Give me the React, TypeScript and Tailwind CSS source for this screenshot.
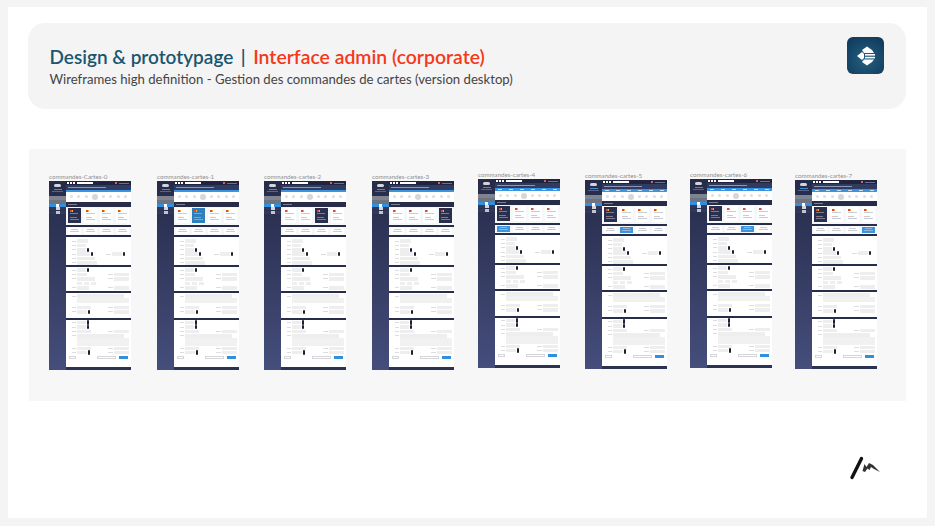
const thumbs = [
  { label: "commandes-Cartes-0", card: 0, tab: -1, wide: false, offset: "mt-0 ml-0" },
  { label: "commandes-cartes-1", card: 1, tab: -1, wide: false, offset: "mt-0 ml-[26px]" },
  { label: "commandes-cartes-2", card: 2, tab: -1, wide: false, offset: "mt-0 ml-[25px]" },
  { label: "commandes-cartes-3", card: 3, tab: -1, wide: false, offset: "mt-0 ml-[26px]" },
  { label: "commandes-cartes-4", card: 0, tab: 0, wide: true, offset: "-mt-[2px] ml-[24px]" },
  { label: "commandes-cartes-5", card: 0, tab: 1, wide: true, offset: "-mt-[1px] ml-[25px]" },
  { label: "commandes-cartes-6", card: 0, tab: 2, wide: true, offset: "-mt-[2px] ml-[23px]" },
  { label: "commandes-cartes-7", card: 0, tab: 3, wide: true, offset: "-mt-[1px] ml-[23px]" },
];

function Line({ className }: { className: string }) {
  return <div className={"h-px bg-[#c9ccd3] " + className} />;
}

function Field({ className }: { className: string }) {
  return <div className={"h-[3.5px] bg-[#eeeeef] " + className} />;
}

function Handle() {
  return <div className="ml-[1px] h-[4.5px] w-[2px] shrink-0 rounded-sm bg-[#1d2030]" />;
}

function Section() {
  return <div className="h-[2px] w-full shrink-0 bg-[#272c49]" />;
}

function FormRow({ left, handle, right, rightHandle }: { left: string; handle?: boolean; right?: boolean; rightHandle?: boolean }) {
  return (
    <div className="flex h-[4.4px] items-center pl-[6px] pr-[2px]">
      <div className="mr-[1px] h-px w-[4px] shrink-0 bg-[#dcdde1]" />
      <Field className={left} />
      {handle && <Handle />}
      {right && (
        <div className={"ml-auto flex items-center " + (rightHandle ? "mr-[4px]" : "")}>
          <div className="mr-[1px] h-px w-[5px] bg-[#dcdde1]" />
          <Field className={rightHandle ? "w-[10px]" : "w-[15px]"} />
          {rightHandle && <Handle />}
        </div>
      )}
    </div>
  );
}

function Card({ active, blue }: { active: boolean; blue: boolean }) {
  const bg = active ? (blue ? "bg-[#2f7fbd]" : "bg-[#2a2f4d]") : "bg-white";
  return (
    <div className={"flex h-[15px] flex-1 flex-col gap-[1px] p-[1.5px] " + bg}>
      <div className="flex h-[2px]">
        <div className="w-[2px] bg-[#e8452c]" />
        <div className="w-[1px] bg-[#f2b01e]" />
      </div>
      <Line className={active ? "w-[8px] opacity-50" : "w-[9px]"} />
      <div className="mt-[1px]" />
      <Line className={active ? "w-[7px] opacity-50" : "w-[6px]"} />
      <Line className={active ? "w-[9px] opacity-50" : "w-[9px]"} />
    </div>
  );
}

function Thumb({ label, card, tab, wide, offset }: { label: string; card: number; tab: number; wide: boolean; offset: string }) {
  return (
    <div className={"flex w-[82px] shrink-0 flex-col " + offset}>
      <div className="h-[6px] whitespace-nowrap text-[6.2px] leading-[6px] text-[#8f8f8f]">{label}</div>
      <div className="mt-[1px] flex h-[189px] bg-white blur-[0.3px]">
        <div className="flex w-[17px] shrink-0 flex-col bg-gradient-to-b from-[#262b49] to-[#454e7c]">
          <div className="mx-auto mt-[3px] h-[3px] w-[7px] rounded-full bg-white/80" />
          <div className="mx-auto mt-[2px] h-[1px] w-[8px] bg-[#3f8fd0]" />
          <div className="mx-auto mt-[1px] h-[1px] w-[11px] bg-[#5b6486]" />
          <div className="mt-[4px] h-[3.5px] bg-[#7e8491]" />
          <div className="mt-[0.5px] h-[3.5px] bg-[#6d7380]" />
          <div className="mt-[0.5px] flex h-[2.5px] justify-center bg-[#2f8fe0]"><div className="w-[3px] bg-white" /></div>
          <div className="mt-[0.5px] flex h-[3px] justify-center bg-[#32385a]"><div className="w-[4px] bg-white/80" /></div>
          <div className="mt-[0.5px] flex h-[3px] justify-center bg-[#32385a]"><div className="w-[4px] bg-white/70" /></div>
        </div>
        <div className="flex min-w-0 flex-1 flex-col">
          <div className="flex h-[4px] shrink-0 items-center bg-[#20243f] pl-[1px]">
            <div className="h-[2px] w-[2px] bg-white" />
            <div className="ml-[1px] h-[2px] w-[2px] bg-white" />
            <div className="ml-[1px] h-[2px] w-[2px] bg-white" />
            <div className="ml-[2px] h-[2px] w-[16px] bg-white" />
            <div className="ml-auto h-[2px] w-[2px] bg-[#c66]" />
            <div className="ml-[2px] mr-[2px] h-[1px] w-[10px] bg-[#6b7190]" />
          </div>
          <div className="flex h-[4.5px] shrink-0 items-center bg-[#303b62] px-[2px]">
            <div className="h-[1px] w-[38px] bg-[#8d96b4]" />
          </div>
          <div className={"flex shrink-0 items-center justify-around bg-[#3a94df] " + (wide ? "h-[3.5px]" : "h-[2px]")}>
            {wide && [0, 1, 2, 3, 4, 5].map((i) => <div key={i} className="h-px w-[4px] bg-white/70" />)}
          </div>
          <div className={"flex shrink-0 items-center justify-around px-[2px] " + (wide ? "h-[9px]" : "h-[10.5px]")}>
            {[0, 1, 2, 3, 4, 5, 6, 7].map((i) => (
              <div key={i} className={i === 3 ? "h-[6px] w-[6px] rounded-full bg-[#d6d7db]" : "h-[3px] w-[3px] rounded-full bg-[#dedfe2]"} />
            ))}
          </div>
          <div className="flex h-[5px] shrink-0 items-center bg-[#272c49] pl-[2px]">
            <div className="h-[1.5px] w-[9px] bg-white/40" />
          </div>
          <div className="flex h-[17.5px] shrink-0 items-start gap-[3px] bg-[#f6f7f9] px-[2px] pt-[1px]">
            {[0, 1, 2, 3].map((i) => (
              <Card key={i} active={i === card} blue={label.endsWith("-1")} />
            ))}
          </div>
          <Section />
          <div className="flex h-[8.5px] shrink-0 items-center gap-[3px] bg-[#f6f7f9] px-[2px]">
            {[0, 1, 2, 3].map((i) => (
              <div key={i} className={"flex h-[6px] flex-1 flex-col items-center justify-center gap-[1px] " + (i === tab ? "bg-[#3a94df]" : "bg-white")}>
                <Line className={i === tab ? "w-[7px] opacity-60" : "w-[7px]"} />
                <Line className={i === tab ? "w-[9px] opacity-60" : "w-[9px]"} />
              </div>
            ))}
          </div>
          <Section />
          <div className="flex h-[28px] shrink-0 flex-col pt-[2px]">
            <FormRow left="w-[11px]" />
            <FormRow left="w-[9px]" />
            <FormRow left="w-[9px]" handle />
            <FormRow left="w-[13px]" handle right rightHandle />
            <FormRow left="w-[18px]" />
            <FormRow left="w-[20px]" />
          </div>
          <Section />
          <div className="flex h-[24px] shrink-0 flex-col pt-[1px]">
            <FormRow left="w-[9px]" handle />
            <FormRow left="w-[10px]" right />
            <FormRow left="w-[18px]" right />
            <div className="flex h-[4.4px] items-center gap-[2px] pl-[11px]">
              <Field className="w-[5px]" />
              <Field className="w-[5px]" />
              <Field className="w-[5px]" />
            </div>
            <FormRow left="w-[12px]" right />
          </div>
          <Section />
          <div className="flex h-[24.5px] shrink-0 flex-col pt-[1px]">
            <FormRow left="w-[47px]" />
            <div className="ml-[11px] mr-[2px] h-[5px] bg-[#f1f1f2]" />
            <div className="h-[2px]" />
            <FormRow left="w-[14px]" right />
            <FormRow left="w-[10px]" handle right />
          </div>
          <Section />
          <div className="flex flex-col pt-[1px]">
            <FormRow left="w-[9px]" handle />
            <FormRow left="w-[9px]" handle />
            <FormRow left="w-[14px]" right />
            <FormRow left="w-[47px]" />
            <div className="ml-[11px] mr-[2px] h-[8px] bg-[#f1f1f2]" />
            <FormRow left="w-[14px]" right />
            <FormRow left="w-[10px]" handle right />
          </div>
          <div className="mt-auto flex items-center px-[3px] pb-[8px]">
            <div className="h-[3px] w-[7px] border border-[#d4d6da] bg-white" />
            <div className="ml-auto h-[3px] w-[19px] border border-[#d4d6da] bg-white" />
            <div className="ml-[3px] h-[3px] w-[9px] bg-[#2f8fe0]" />
          </div>
          <div className="h-[3px] shrink-0 bg-[#2c3252]" />
        </div>
      </div>
    </div>
  );
}

export default function App() {
  return (
    <div className="h-[526px] w-[935px] overflow-hidden bg-[#f4f4f4] px-[8px] pt-[7px] font-['Lato',sans-serif]">
      <div className="h-[511px] bg-white pl-[20px] pr-[21px] pt-[16px]">
        <div className="flex h-[86px] items-start justify-between rounded-[17px] bg-[#f4f4f4] pl-[21.5px] pr-[22px] pt-[14px]">
          <div className="mt-[7px]">
            <div className="whitespace-nowrap text-[19px] font-semibold leading-[26px] text-[#1a566f]">
              Design &amp; prototypage<span className="mx-[7.5px]">|</span>
              <span className="text-[19.4px] text-[#f5381a]">Interface admin (corporate)</span>
            </div>
            <div className="whitespace-nowrap text-[13.15px] leading-[19px] text-[#444444]">
              Wireframes high definition - Gestion des commandes de cartes (version desktop)
            </div>
          </div>
          <div className="flex h-[37px] w-[37px] items-center justify-center rounded-[6px] bg-[radial-gradient(circle_at_50%_60%,#24607f,#0f3558)]">
            <svg width="22" height="24" viewBox="0 0 22 24" fill="white">
              <path d="M2 12 L7 8 L9 10 L9 14 L7 16 Z" />
              <path d="M7 6 L12 2.5 L17 6 L19 9 L9 9 Z" />
              <rect x="10" y="10" width="10" height="1.6" />
              <rect x="10" y="12.8" width="10" height="1.6" />
              <path d="M9 15.5 L19 15.5 L17 18 L12 21.5 L7 18 Z" />
            </svg>
          </div>
        </div>
        <div className="ml-[1px] mt-[40px] flex h-[252px] bg-[#f7f7f7] pl-[20px] pt-[25px]">
          {thumbs.map((t) => (
            <Thumb key={t.label} {...t} />
          ))}
        </div>
        <div className="mt-[55px] flex justify-end pr-[25px]">
          <svg width="32" height="24" viewBox="0 0 32 24">
            <path d="M3 21.5 L12.5 2.5" stroke="#111" strokeWidth="3.4" strokeLinecap="round" />
            <path d="M13.5 15 L15.5 8 L17.5 11 L20 7 L24 9 L31 16 L25 13 L22 11 L20.5 14 L18.5 12.5 L16 16 Z" fill="#333" />
          </svg>
        </div>
      </div>
    </div>
  );
}
